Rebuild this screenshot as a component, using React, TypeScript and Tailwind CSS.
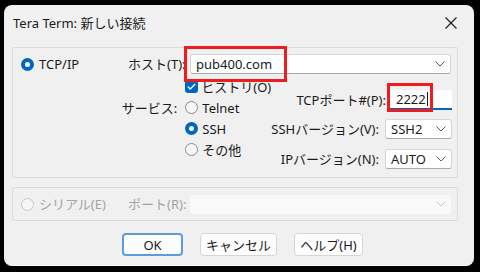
import React from "react";

const font = { fontFamily: '"Noto Sans", "Noto Sans CJK JP", sans-serif' };

const Chevron = ({ color = "#5f5f5f" }: { color?: string }) => (
  <svg width="10" height="6" viewBox="0 0 10 6" className="shrink-0">
    <path d="M0.5 0.5 L5 5 L9.5 0.5" fill="none" stroke={color} strokeWidth="1" />
  </svg>
);

const Radio = ({ checked, disabled }: { checked?: boolean; disabled?: boolean }) =>
  checked ? (
    <span className="w-[13px] h-[13px] rounded-full bg-[#0067c0] flex items-center justify-center shrink-0">
      <span className="w-[5px] h-[5px] rounded-full bg-white" />
    </span>
  ) : (
    <span
      className={`w-[13px] h-[13px] rounded-full border shrink-0 ${
        disabled ? "border-[#c8c8c8] bg-[#f5f5f5]" : "border-[#8a8a8a] bg-[#f7f7f7]"
      }`}
    />
  );

const Combo = ({
  value,
  className,
  disabled,
}: {
  value?: string;
  className: string;
  disabled?: boolean;
}) => (
  <div
    className={`flex items-center justify-between rounded-[3px] pl-[5px] pr-[5px] ${
      disabled
        ? "bg-[#f9f9f9]"
        : "bg-white border border-[#d6d6d6] border-b-[#a8a8a8]"
    } ${className}`}
  >
    <span className="text-[13px] leading-[16px] text-[#1b1b1b]">{value}</span>
    <Chevron color={disabled ? "#c4c4c4" : "#5f5f5f"} />
  </div>
);

const Btn = ({ label, w, primary }: { label: string; w: string; primary?: boolean }) => (
  <div
    className={`${w} h-[23px] rounded-[4px] bg-[#fdfdfd] flex items-center justify-center text-[13px] leading-[16px] text-[#1b1b1b] ${
      primary ? "border-2 border-[#5a9ee0]" : "border border-[#d5d5d5]"
    }`}
  >
    {label}
  </div>
);

export default function App() {
  return (
    <div className="w-[480px] h-[272px] bg-black pt-[5px] pl-[4px] overflow-hidden" style={font}>
      <div className="relative w-[470px] h-[261px] rounded-[8px] bg-[#f0f0f0] border-b border-[#fafafa]">
        {/* title bar */}
        <div className="h-[42px] flex items-start justify-between pt-[10px] pl-[9px] pr-[17px]">
          <span className="text-[13px] leading-[16px] text-[#1b1b1b]">Tera Term: 新しい接続</span>
          <svg width="12" height="12" viewBox="0 0 12 12" className="mt-[2px]">
            <path d="M0.5 0.5 L11.5 11.5 M11.5 0.5 L0.5 11.5" stroke="#1b1b1b" strokeWidth="1.1" />
          </svg>
        </div>

        {/* TCP/IP group */}
        <div className="ml-[8px] w-[446px] h-[131px] border border-[#dcdcdc] rounded-[2px] text-[13px] leading-[16px] text-[#1b1b1b]">
          <div className="mt-[6px] h-[20px] flex items-center">
            <div className="w-[115px] pl-[8px] flex items-center gap-[5px]">
              <Radio checked />
              <span>TCP/IP</span>
            </div>
            <div className="w-[56px] text-right whitespace-nowrap">ホスト(T):</div>
            <Combo value="pub400.com" className="ml-[6px] w-[261px] h-[20px]" />
          </div>

          <div className="mt-[2px] flex">
            <div className="w-[115px]" />
            <div className="w-[56px] pt-[21px]">
              <div className="h-[21px] flex items-center justify-end whitespace-nowrap">サービス:</div>
            </div>
            <div className="ml-[8px] w-[90px] flex flex-col">
              <div className="h-[21px] flex items-center gap-[3px]">
                <span className="w-[13px] h-[13px] rounded-[3px] bg-[#0067c0] flex items-center justify-center">
                  <svg width="9" height="7" viewBox="0 0 9 7">
                    <path d="M0.8 3.6 L3.2 6 L8.2 1" fill="none" stroke="white" strokeWidth="1.3" />
                  </svg>
                </span>
                <span className="whitespace-nowrap">ヒストリ(O)</span>
              </div>
              <div className="h-[21px] flex items-center gap-[4px]">
                <Radio />
                <span>Telnet</span>
              </div>
              <div className="h-[21px] flex items-center gap-[4px]">
                <Radio checked />
                <span>SSH</span>
              </div>
              <div className="h-[21px] flex items-center gap-[4px]">
                <Radio />
                <span>その他</span>
              </div>
            </div>
            <div className="flex-1 flex flex-col items-end pr-[5px] pt-[14px]">
              <div className="h-[20px] flex items-center">
                <span className="whitespace-nowrap">TCPポート#(P):</span>
                <div className="ml-[4px] w-[62px] h-[20px] bg-white border-b-2 border-[#0067c0] flex items-center pl-[6px]">
                  <span>2222</span>
                  <span className="ml-[1px] w-[1px] h-[14px] bg-[#1b1b1b]" />
                </div>
              </div>
              <div className="mt-[9px] h-[20px] flex items-center">
                <span className="whitespace-nowrap">SSHバージョン(V):</span>
                <Combo value="SSH2" className="ml-[6px] w-[67px] h-[20px]" />
              </div>
              <div className="mt-[10px] h-[20px] flex items-center">
                <span className="whitespace-nowrap">IPバージョン(N):</span>
                <Combo value="AUTO" className="ml-[6px] w-[67px] h-[20px]" />
              </div>
            </div>
          </div>
        </div>

        {/* serial group */}
        <div className="mt-[9px] ml-[8px] w-[446px] h-[34px] border border-[#dcdcdc] rounded-[2px] flex items-center text-[13px] leading-[16px] text-[#a3a3a3]">
          <div className="w-[115px] pl-[8px] flex items-center gap-[5px]">
            <Radio disabled />
            <span className="whitespace-nowrap">シリアル(E)</span>
          </div>
          <div className="w-[56px] text-right whitespace-nowrap">ポート(R):</div>
          <Combo disabled className="ml-[6px] w-[261px] h-[19px]" />
        </div>

        {/* buttons */}
        <div className="mt-[12px] pl-[118px] flex gap-[17px]">
          <Btn label="OK" w="w-[61px]" primary />
          <Btn label="キャンセル" w="w-[77px]" />
          <Btn label="ヘルプ(H)" w="w-[69px]" />
        </div>

        {/* red highlight boxes */}
        <div className="absolute left-[180px] top-[41px] w-[103px] h-[36px] border-[3px] border-[#ee1c1c]" />
        <div className="absolute left-[383px] top-[78px] w-[46px] h-[29px] border-[3px] border-[#ee1c1c]" />
      </div>
    </div>
  );
}
